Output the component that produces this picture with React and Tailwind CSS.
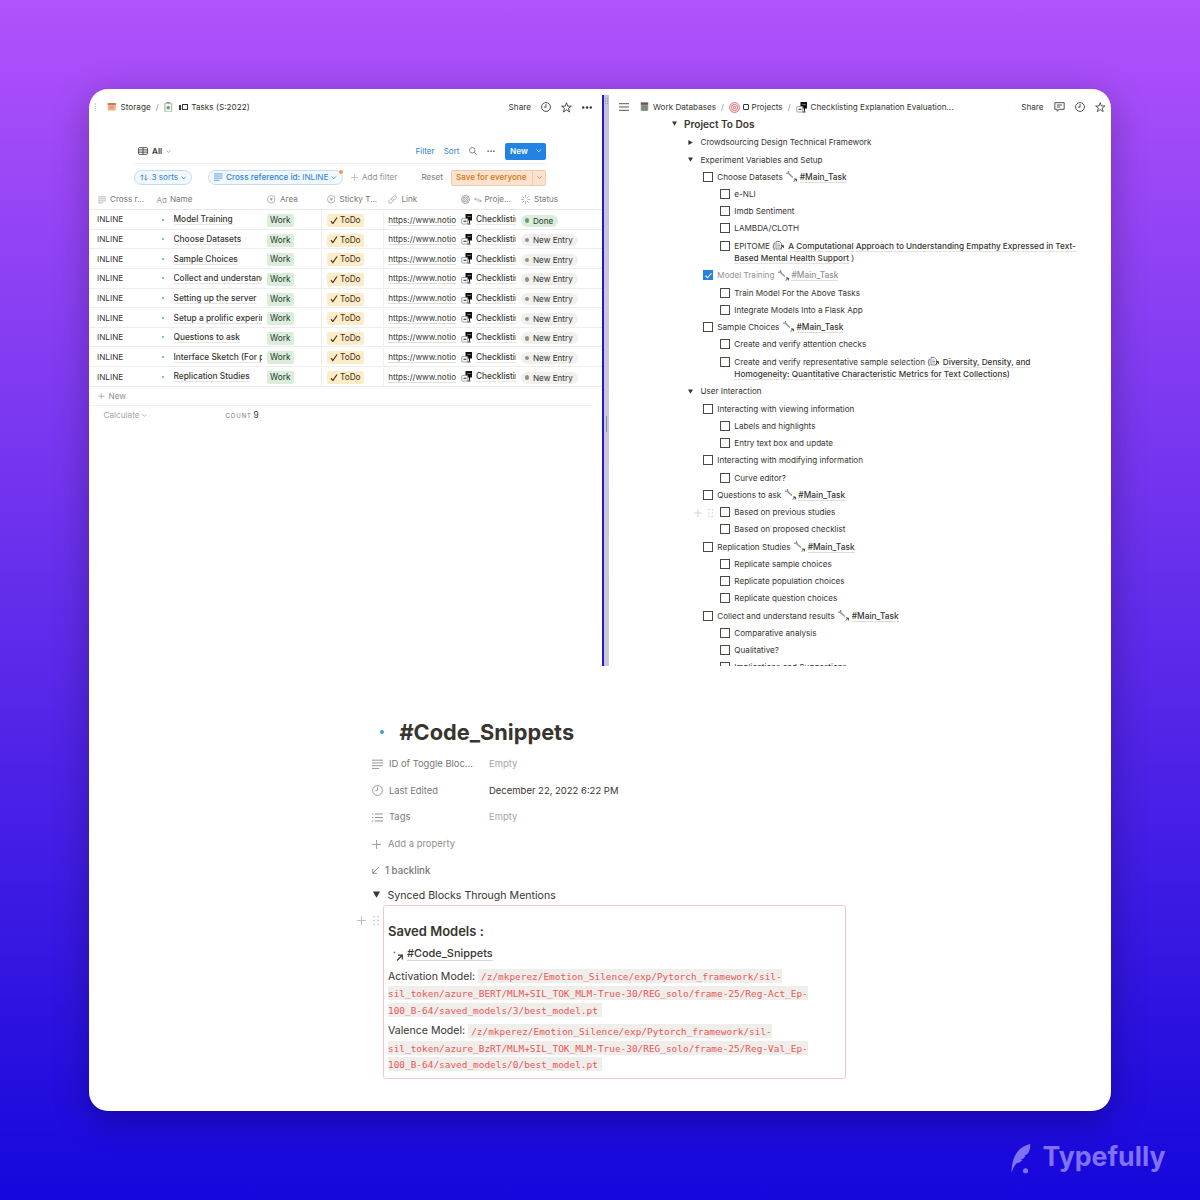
import React from "react";

/* ---------- icons ---------- */
const Lines = ({ className }) => (
  <svg className={className} viewBox="0 0 14 14" stroke="currentColor" strokeWidth="1.2" fill="none">
    <path d="M0 1.5h14M0 5h14M0 8.5h14M0 12h9" />
  </svg>
);
const Clock = ({ className }) => (
  <svg className={className} viewBox="0 0 14 14" stroke="currentColor" strokeWidth="1.2" fill="none">
    <circle cx="7" cy="7" r="6.2" />
    <path d="M7 3v4.2H4" />
  </svg>
);
const Star = ({ className }) => (
  <svg className={className} viewBox="0 0 14 14" stroke="currentColor" strokeWidth="1.1" fill="none" strokeLinejoin="round">
    <path d="M7 .9l1.6 4.4h4.6L9.5 8.1l1.4 4.7L7 10l-3.900 2.800 1.400-4.700L.8 5.300h4.600z" />
  </svg>
);
const Dots = ({ className }) => (
  <svg className={className} viewBox="0 0 14 4" fill="currentColor">
    <circle cx="2" cy="2" r="1.6" /><circle cx="7" cy="2" r="1.6" /><circle cx="12" cy="2" r="1.6" />
  </svg>
);
const Chevron = ({ className }) => (
  <svg className={className} viewBox="0 0 10 6" fill="none" stroke="currentColor" strokeWidth="1.5">
    <path d="M1 .8l4 4 4-4" />
  </svg>
);
const Plus = ({ className }) => (
  <svg className={className} viewBox="0 0 14 14" fill="none" stroke="currentColor" strokeWidth="1.3">
    <path d="M7 0v14M0 7h14" />
  </svg>
);
const Grip = ({ className }) => (
  <svg className={className} viewBox="0 0 8 14" fill="currentColor">
    <path d="M0 0h2v2H0zM6 0H8v2H6zM0 6h2v2H0zM6 6H8v2H6zM0 12h2V14H0zM6 12H8V14H6z" />
  </svg>
);
const Search = ({ className }) => (
  <svg className={className} viewBox="0 0 14 14" fill="none" stroke="currentColor" strokeWidth="1.4">
    <circle cx="5.700" cy="5.700" r="4.800" /><path d="M9.200 9.200l4.300 4.300" />
  </svg>
);
const Select = ({ className }) => (
  <svg className={className} viewBox="0 0 14 14">
    <circle cx="7" cy="7" r="6.200" fill="none" stroke="currentColor" strokeWidth="1.200" />
    <path d="M4.300 5.500h5.400L7 9.700z" fill="currentColor" />
  </svg>
);
const LinkIcon = ({ className }) => (
  <svg className={className} viewBox="0 0 14 14" fill="none" stroke="currentColor" strokeWidth="1.200" strokeLinecap="round">
    <path d="M6 8.200a2.600 2.600 0 0 1 0-3.600l2.700-2.800a2.500 2.500 0 0 1 3.600 3.600L10.500 7.200" />
    <path d="M8 5.800a2.600 2.600 0 0 1 0 3.600l-2.700 2.800a2.500 2.500 0 0 1-3.600-3.600L3.500 6.800" />
  </svg>
);
const TableIcon = ({ className }) => (
  <svg className={className} viewBox="0 0 18 14" fill="none" stroke="currentColor" strokeWidth="1.500">
    <rect x="1" y="1" width="16" height="12" rx="1.500" />
    <path d="M1 5h16M1 9h16M9 1v12" />
  </svg>
);
const Target = ({ className, color }) => (
  <svg className={className} viewBox="0 0 14 14" fill="none" stroke={color} strokeWidth="1.200">
    <circle cx="7" cy="7" r="6.200" /><circle cx="7" cy="7" r="3.900" /><circle cx="7" cy="7" r="1.500" />
  </svg>
);
const Spinner = ({ className }) => (
  <svg className={className} viewBox="0 0 14 14" stroke="currentColor" strokeWidth="1.200" strokeLinecap="round">
    <path d="M7 .8v2.600M7 10.600v2.600M.8 7h2.600M10.600 7h2.600M2.600 2.600l1.900 1.900M9.500 9.500l1.900 1.900M2.600 11.400l1.900-1.900M9.500 4.500l1.900-1.900" />
  </svg>
);
const SortIcon = ({ className }) => (
  <svg className={className} viewBox="0 0 14 12" fill="none" stroke="currentColor" strokeWidth="1.400">
    <path d="M3.800 11V1.500M1 4.200l2.800-2.900 2.800 2.900M10.200 1v9.500M7.600 7.800l2.600 2.900L13 7.800" />
  </svg>
);
const Turn = ({ className }) => (
  <svg className={className} viewBox="0 0 14 10" fill="none" stroke="currentColor" strokeWidth="1.300">
    <path d="M4 1L1.200 3.400 4 5.800M1.200 3.400H9M10 4.200l2.800 2.400L10 9M12.800 6.600H5.500" />
  </svg>
);
const Checks = ({ className }) => (
  <svg className={className} viewBox="0 0 22 22">
    <path d="M9 0h13v13h-4v6h-2v-6H9z" fill="#111" />
    <path d="M12.500 5h7" stroke="#aaa" strokeWidth="1.300" />
    <rect x="1.500" y="9" width="12" height="11" rx="1" fill="#fff" stroke="#888" strokeWidth="1.500" />
    <path d="M5 14.500h6" stroke="#222" strokeWidth="2" />
    <path d="M13 20h6" stroke="#333" strokeWidth="2" />
  </svg>
);
const Wrench = ({ className }) => (
  <svg className={className} viewBox="0 0 20 20" fill="none">
    <path d="M4.500 0L5 4.300 0 4M4.500 4.500L12.500 12" stroke="#8f8f8f" strokeWidth="2.400" />
    <path d="M14 19.500l4.500-5M14.500 14.500h4.500v4.500" stroke="#444" strokeWidth="1.700" />
  </svg>
);
const DocLink = ({ className }) => (
  <svg className={className} viewBox="0 0 20 18" fill="none">
    <path d="M2 1h7l4 4v11H2z" stroke="#666" strokeWidth="1.500" />
    <path d="M4.500 6h5M4.500 9h6M4.500 12h6" stroke="#777" strokeWidth="1.300" />
    <path d="M11 15l5.500-5.500M12 9h5v5" stroke="#333" strokeWidth="1.600" />
  </svg>
);
const Tri = ({ className }) => (
  <svg className={className} viewBox="0 0 10 10" fill="currentColor"><path d="M0 .8h10L5 9.600z" /></svg>
);
const Box = ({ className }) => (
  <svg className={className} viewBox="0 0 18 18">
    <rect x="1.500" y="2" width="15" height="14" rx="1" fill="#eab088" />
    <path d="M1.500 2h15v3.500h-15z" fill="#c9794d" /><path d="M5.500 9h7v2.500h-7z" fill="#cf8a60" />
  </svg>
);
const Battery = ({ className }) => (
  <svg className={className} viewBox="0 0 16 20">
    <rect x="1.500" y="2" width="13" height="17" rx="1.500" fill="#f3f5f3" stroke="#8f9a94" strokeWidth="1.500" />
    <path d="M5 0h6v3H5z" fill="#8a968e" /><circle cx="8" cy="11" r="3.300" fill="#4fae6a" />
  </svg>
);
const Cabinet = ({ className }) => (
  <svg className={className} viewBox="0 0 16 18">
    <rect x="1" y="1" width="14" height="16" fill="#a3a69f" />
    <path d="M1 1h14v4H1z" fill="#6b5650" />
    <path d="M1 9h14M1 13h14M5.500 5v12M10.500 5v12" stroke="#5a6a5c" strokeWidth="1.200" />
  </svg>
);
const Comment = ({ className }) => (
  <svg className={className} viewBox="0 0 16 15" fill="none" stroke="currentColor" strokeWidth="1.300" strokeLinejoin="round">
    <path d="M1 1h14v10H7.500L4.500 13.800V11H1zM4 4.500h8M4 7.500h5" />
  </svg>
);
const Feather = ({ className }) => (
  <svg className={className} viewBox="0 0 60 92" fill="currentColor">
    <path d="M58 0C42 4 27 12 18 25 7 41 1 60 1 88c4-12 9-22 15-29 7-1 14-4 18-10l-6-1c7-1 12-5 16-11l-5-1c6-1 11-5 14-10 4-7 6-15 5-26z" />
    <circle cx="44" cy="82" r="8" />
  </svg>
);

/* ---------- table pane ---------- */
const rows = [
  ["Model Training", true],
  ["Choose Datasets"],
  ["Sample Choices"],
  ["Collect and understand"],
  ["Setting up the server"],
  ["Setup a prolific experim"],
  ["Questions to ask"],
  ["Interface Sketch (For p"],
  ["Replication Studies"],
];

const Row = ({ name, done }) => (
  <div className="flex h-[19.65px] items-center border-b border-[#eeeeed] pt-[0.500px] pl-[8px] whitespace-nowrap">
    <span className="w-[62.500px] text-[8.200px]">INLINE</span>
    <span className="mr-[9.500px] ml-[2.500px] size-[2px] rounded-full bg-[#3fb6a0]" />
    <span className="w-[88.500px] overflow-hidden text-[8.330px] font-medium">
      <span className="underline decoration-[#e6e6e4] decoration-[1px] underline-offset-2">{name}</span>
    </span>
    <span className="flex w-[59.500px] self-stretch border-r border-[#eeeeed] pl-[4.500px] pt-[3.500px]">
      <span className="h-[13px] rounded-[2px] bg-[#dbeddb] px-[3.500px] text-[8.250px] leading-[13px] text-[#1c3829]">Work</span>
    </span>
    <span className="flex w-[62px] self-stretch border-r border-[#f1f1f0] pl-[5px] pt-[3.500px]">
      <span className="flex h-[13px] items-center rounded-[2px] bg-[#fdecc8] px-[3px] text-[8.250px] leading-[13px] text-[#402c1b]">
        <svg className="mr-[2.500px] h-[7.500px] w-[8px]" viewBox="0 0 16 16" fill="none" stroke="#3a2a1a" strokeWidth="2.400"><path d="M1.500 9l4 5L14.500 1" /></svg>
        ToDo
      </span>
    </span>
    <span className="ml-[4.700px] w-[68px] text-[8.100px]">
      <span className="underline decoration-[#dededc] decoration-[1px] underline-offset-2">https://www.notio</span>
    </span>
    <Checks className="ml-[4.800px] h-[11px] w-[11px] shrink-0" />
    <span className="ml-[4px] w-[40.500px] overflow-hidden text-[8.300px] font-medium">
      <span className="underline decoration-[#e6e6e4] decoration-[1px] underline-offset-2">Checklistin</span>
    </span>
    {done ? (
      <span className="mt-[2px] ml-[4.500px] flex h-[12px] items-center rounded-full bg-[#dbeddb] pr-[5px] pl-[4px] text-[8.150px] leading-[12px] text-[#1c3829]">
        <i className="mr-[3.500px] size-[4.500px] rounded-full bg-[#6c9b7d]" />Done
      </span>
    ) : (
      <span className="mt-[2px] ml-[4.500px] flex h-[12px] items-center rounded-full bg-[#f1f0ef] pr-[5px] pl-[4px] text-[8.150px] leading-[12px] text-[#32302c]">
        <i className="mr-[3.500px] size-[4.500px] rounded-full bg-[#91918e]" />New Entry
      </span>
    )}
  </div>
);

const TablePane = () => (
  <div className="flex w-[513px] flex-col pt-[6px] text-[#37352f]">
    <div className="flex h-[24px] items-center pl-[6px] text-[8.200px] whitespace-nowrap">
      <span className="h-[8px] border-l border-dotted border-[#d0d0e4]" />
      <Box className="ml-[10.500px] size-[9.500px]" />
      <span className="ml-[4.500px]">Storage</span>
      <span className="mx-[5px] text-[#8b8a86]">/</span>
      <Battery className="ml-[0.500px] h-[10.500px] w-[8.500px]" />
      <span className="ml-[6px] flex items-center gap-[1.500px]">
        <i className="h-[5px] w-[2px] bg-[#37352f]" />
        <i className="size-[6px] border border-r-[1.500px] border-b-[1.500px] border-[#37352f]" />
      </span>
      <span className="ml-[3px]">Tasks (S:2022)</span>
      <span className="ml-auto">Share</span>
      <Clock className="ml-[10px] size-[10px]" />
      <Star className="ml-[10px] size-[11px]" />
      <Dots className="mr-[9px] ml-[9px] h-[3px] w-[12px]" />
    </div>
    <div className="mt-[20px] mr-[56px] ml-[45px] flex h-[25px] items-center border-b border-[#eeeeed] pl-[4px] text-[8.100px] whitespace-nowrap">
      <TableIcon className="h-[8px] w-[10px]" />
      <span className="ml-[4px] font-semibold">All</span>
      <Chevron className="ml-[4px] h-[3px] w-[5px] text-[#91918e]" />
      <span className="ml-auto text-[#2783de]">Filter</span>
      <span className="ml-[9px] text-[#2783de]">Sort</span>
      <Search className="ml-[9px] size-[8px] text-[#6b6a66]" />
      <Dots className="ml-[10px] h-[2.500px] w-[8px] text-[#7a7975]" />
      <span className="ml-[10.500px] flex h-[17px] w-[41px] items-center rounded-[2px] bg-[#2383e2] pl-[5px] text-[8.200px] font-semibold text-white">
        New<Chevron className="ml-[8.500px] h-[3.500px] w-[5.500px]" />
      </span>
    </div>
    <div className="mr-[56px] ml-[45px] flex h-[27px] items-center text-[8.150px] whitespace-nowrap">
      <span className="flex h-[14.500px] w-[58px] items-center rounded-full border border-[#c3dcf4] bg-[#f3f8fd] pl-[5px] text-[#2783de]">
        <SortIcon className="mr-[3.500px] h-[7px] w-[8px]" />3 sorts<Chevron className="ml-[2.500px] h-[3.500px] w-[5.500px]" />
      </span>
      <span className="relative ml-[16px] flex h-[14.500px] w-[135px] items-center rounded-full border border-[#c3dcf4] bg-[#f3f8fd] pl-[5px] text-[#2783de]">
        <Lines className="mr-[3.500px] size-[8.500px]" />
        <b className="font-medium">Cross reference id:</b>&nbsp;INLINE
        <Chevron className="ml-[3px] h-[3.500px] w-[5.500px]" />
        <i className="absolute -top-[1.500px] -right-[0.500px] size-[4px] rounded-full bg-[#e59a5c]" />
      </span>
      <Plus className="ml-[8px] size-[7px] text-[#a5a4a0]" />
      <span className="ml-[4px] text-[#91908c]">Add filter</span>
      <span className="ml-auto text-[#7d7c78]">Reset</span>
      <span className="ml-[8px] flex h-[16px] w-[95px] items-center rounded-[2px] border border-[#f3c9a8] bg-[#fae3d0] text-[#d9730d]">
        <span className="pl-[4px] font-medium">Save for everyone</span>
        <span className="ml-auto flex h-full w-[13px] items-center justify-center border-l border-[#f3c9a8]"><Chevron className="h-[3px] w-[5px]" /></span>
      </span>
    </div>
    <div className="flex h-[19px] items-center border-b border-[#e9e9e7] pb-px pl-[9px] text-[8.150px] whitespace-nowrap text-[#787774]">
      <Lines className="size-[8px] text-[#9b9a97]" />
      <span className="ml-[4px] w-[46.500px]">Cross r...</span>
      <span className="text-[8px] text-[#9b9a97]">Aɑ</span>
      <span className="ml-[3px] w-[97.500px]">Name</span>
      <Select className="size-[8.500px] text-[#9b9a97]" />
      <span className="ml-[4px] w-[47px]">Area</span>
      <Select className="size-[8.500px] text-[#9b9a97]" />
      <span className="ml-[4px] w-[49px]">Sticky T...</span>
      <LinkIcon className="size-[9px] text-[#9b9a97]" />
      <span className="ml-[4px] w-[60px]">Link</span>
      <Target className="size-[9px]" color="#8b8a86" />
      <Turn className="ml-[4px] h-[6px] w-[8px] text-[#9b9a97]" />
      <span className="ml-[2px] w-[37px]">Proje...</span>
      <Spinner className="size-[9px] text-[#9b9a97]" />
      <span className="ml-[3.500px]">Status</span>
    </div>
    {rows.map(([name, done]) => <Row key={name} name={name} done={done} />)}
    <div className="mr-[9px] flex h-[19px] items-center border-b border-[#f1f1f0] pl-[9px] text-[8.200px] text-[#91908c]">
      <Plus className="mr-[4px] size-[6.500px]" />New
    </div>
    <div className="flex h-[19px] items-center pl-[14.500px] text-[8.200px] text-[#a5a4a0]">
      Calculate<Chevron className="ml-[2px] h-[3px] w-[5px]" />
      <span className="ml-[79px] text-[6px] tracking-[0.900px] text-[#787774]">COUNT</span>
      <span className="ml-[1.500px] text-[8.300px] text-[#37352f]">9</span>
    </div>
  </div>
);

/* ---------- checklist pane ---------- */
const Mention = () => (
  <>
    <Wrench className="mr-[2.300px] ml-[1.500px] inline-block h-[11px] w-[11px] -translate-y-px align-middle" />
    <span className="border-b border-[#dededc] text-[8.350px] font-medium">#Main_Task</span>
  </>
);
const Check = () => <span className="mt-[3.500px] size-[10px] shrink-0 border border-[#4a4945]" />;
const Item = ({ sub, children }) => (
  <div className={sub ? "flex pl-[111px]" : "flex pl-[94px]"}>
    <Check />
    <span className="ml-[4.300px] block py-[2.400px] text-[8.140px] leading-[12.470px]">{children}</span>
  </div>
);
const Toggle = ({ closed, children }) => (
  <div className="flex h-[17.270px] shrink-0 items-center pl-[79px] text-[8.100px]">
    <Tri className={closed ? "size-[5px] -rotate-90" : "size-[5px]"} />
    <span className="ml-[7.500px]">{children}</span>
  </div>
);
const linked = "border-b border-[#e4e4e2] text-[8.210px] font-medium";

const ChecklistPane = () => (
  <div className="flex h-[577px] w-[502px] flex-col overflow-hidden pt-[6px] whitespace-nowrap text-[#37352f]">
    <div className="flex h-[24px] shrink-0 items-center pr-[6px] pl-[10px] text-[8.150px]">
      <svg className="h-[8px] w-[10px]" viewBox="0 0 10 8" stroke="#55534e" strokeWidth="1"><path d="M0 .7h10M0 4h10M0 7.300h10" /></svg>
      <Cabinet className="ml-[10.500px] h-[9.500px] w-[9px]" />
      <span className="ml-[4.500px]">Work Databases</span>
      <span className="mx-[5px] text-[#8b8a86]">/</span>
      <Target className="size-[11px]" color="#dd5a5f" />
      <i className="ml-[3.500px] size-[6px] rounded-[1px] border border-r-[1.500px] border-b-[1.500px] border-[#37352f]" />
      <span className="ml-[2px]">Projects</span>
      <span className="mx-[5px] text-[#8b8a86]">/</span>
      <Checks className="size-[11px]" />
      <span className="ml-[4px]">Checklisting Explanation Evaluation...</span>
      <span className="ml-auto">Share</span>
      <Comment className="ml-[10px] h-[10px] w-[11px]" />
      <Clock className="ml-[10px] size-[10px]" />
      <Star className="ml-[10px] size-[10.500px]" />
    </div>
    <div className="-mt-[3px] flex h-[17.700px] shrink-0 items-center pl-[62.500px]">
      <Tri className="size-[5px] -translate-y-px" />
      <span className="ml-[7.500px] text-[10.080px] font-semibold">Project To Dos</span>
    </div>
    <Toggle closed>Crowdsourcing Design Technical Framework</Toggle>
    <Toggle>Experiment Variables and Setup</Toggle>
    <Item>Choose Datasets <Mention /></Item>
    <Item sub>e-NLI</Item>
    <Item sub>Imdb Sentiment</Item>
    <Item sub>LAMBDA/CLOTH</Item>
    <Item sub>
      EPITOME (<DocLink className="mr-[3px] inline-block h-[9px] w-[10px] -translate-y-px align-middle" /><span className={linked}>A Computational Approach to Understanding Empathy Expressed in Text-</span><br />
      <span className={linked}>Based Mental Health Support</span> )
    </Item>
    <div className="flex pl-[94px] text-[#91908c]">
      <span className="mt-[3.500px] flex size-[10px] shrink-0 items-center justify-center bg-[#2383e2]">
        <svg className="size-[7px]" viewBox="0 0 14 14" fill="none" stroke="#fff" strokeWidth="2.200"><path d="M1 7.500l4 4L13 2.500" /></svg>
      </span>
      <span className="ml-[4.300px] block py-[2.400px] text-[8.140px] leading-[12.470px]">Model Training <Mention /></span>
    </div>
    <Item sub>Train Model For the Above Tasks</Item>
    <Item sub>Integrate Models Into a Flask App</Item>
    <Item>Sample Choices <Mention /></Item>
    <Item sub>Create and verify attention checks</Item>
    <Item sub>
      Create and verify representative sample selection (<DocLink className="mr-[2.500px] inline-block h-[9px] w-[10px] -translate-y-px align-middle" /><span className={linked}>Diversity, Density, and</span><br />
      <span className="border-b border-[#e4e4e2] text-[8.230px] font-medium">Homogeneity: Quantitative Characteristic Metrics for Text Collections)</span>
    </Item>
    <Toggle>User Interaction</Toggle>
    <Item>Interacting with viewing information</Item>
    <Item sub>Labels and highlights</Item>
    <Item sub>Entry text box and update</Item>
    <Item>Interacting with modifying information</Item>
    <Item sub>Curve editor?</Item>
    <Item>Questions to ask <Mention /></Item>
    <div className="relative">
      <Item sub>Based on previous studies</Item>
      <div className="absolute top-[5px] left-[84.500px] flex items-center gap-[6px] text-[#c4c3c0]">
        <Plus className="size-[8px]" /><Grip className="h-[8px] w-[5px]" />
      </div>
    </div>
    <Item sub>Based on proposed checklist</Item>
    <Item>Replication Studies <Mention /></Item>
    <Item sub>Replicate sample choices</Item>
    <Item sub>Replicate population choices</Item>
    <Item sub>Replicate question choices</Item>
    <Item>Collect and understand results <Mention /></Item>
    <Item sub>Comparative analysis</Item>
    <Item sub>Qualitative?</Item>
    <Item sub>Implications and Suggestions</Item>
  </div>
);

/* ---------- snippets page ---------- */
const Prop = ({ icon, label, children, muted }) => (
  <div className="flex h-[26.450px] items-center">
    <span className="w-[17px] text-[#91908c]">{icon}</span>
    <span className="w-[100px] text-[9.400px] text-[#787774]">{label}</span>
    <span className={muted ? "text-[9.450px] text-[#a5a4a0]" : "text-[9.480px] text-[#37352f]"}>{children}</span>
  </div>
);
const code = "bg-[#efeeeb] py-[1.500px] font-['DejaVu_Sans_Mono',monospace] text-[9.430px] text-[#eb5757]";

const SnippetsPage = () => (
  <div className="mt-[47px] ml-[283px] w-[475px] text-[#37352f]">
    <div className="flex h-[37px] items-center">
      <i className="ml-[7.500px] size-[4px] -translate-y-px rounded-full bg-[#35a0d8]" />
      <h1 className="ml-[16px] -translate-y-[0.500px] text-[21.750px] font-bold">#Code_Snippets</h1>
    </div>
    <div className="pt-[0.300px]">
      <Prop muted icon={<Lines className="size-[11px]" />} label="ID of Toggle Bloc...">Empty</Prop>
      <Prop icon={<Clock className="size-[11px]" />} label="Last Edited">December 22, 2022 6:22 PM</Prop>
      <Prop muted icon={<svg className="h-[9px] w-[11px]" viewBox="0 0 11 9" stroke="currentColor" strokeWidth="1"><path d="M0 1h1.500M3 1h8M0 4.500h1.500M3 4.500h8M0 8h1.500M3 8h8" /></svg>} label="Tags">Empty</Prop>
    </div>
    <div className="flex h-[26.800px] items-center text-[9.430px] text-[#91908c]">
      <Plus className="mr-[7px] size-[9px]" />Add a property
    </div>
    <div className="flex h-[27px] items-center text-[9.700px] font-medium text-[#787774]">
      <svg className="mr-[6px] size-[7px]" viewBox="0 0 10 10" fill="none" stroke="currentColor" strokeWidth="1.200"><path d="M9.500.5L1 9M1 3v6h6" /></svg>
      1 backlink
    </div>
    <div className="flex h-[20.150px] items-center pt-[3px] text-[10.580px]">
      <Tri className="mr-[8px] ml-[0.500px] size-[7px] -translate-y-px" /><span className="leading-none">Synced Blocks Through Mentions</span>
    </div>
    <div className="relative ml-[11px] h-[174px] w-[463px] rounded-[3px] border border-[#f6c6c2] pl-[4px] whitespace-nowrap">
      <div className="absolute top-[10px] -left-[27px] flex items-center gap-[7px] text-[#b5b4b1]">
        <Plus className="size-[9px]" /><Grip className="h-[9px] w-[6px]" />
      </div>
      <h2 className="mt-[16px] text-[13px] leading-[18px] font-semibold">Saved Models :</h2>
      <div className="mt-[5px] flex h-[18px] items-center">
        <svg className="mr-[4px] ml-[5px] h-[10px] w-[10px] translate-y-[2px]" viewBox="0 0 10 10" fill="none">
          <circle cx="1.500" cy="1.500" r="1" fill="#35a0b8" /><path d="M4 9.500L9 4.500M5 4.200h4.300v4.300" stroke="#37352f" strokeWidth="1.200" />
        </svg>
        <span className="border-b border-[#d8d8d6] text-[10.950px] leading-[13px] font-medium">#Code_Snippets</span>
      </div>
      <p className="mt-[6.200px] text-[10.600px] leading-[16.700px]">
        Activation Model: <code className={code + " pl-[3px]"}>/z/mkperez/Emotion_Silence/exp/Pytorch_framework/sil-</code><br />
        <code className={code}>sil_token/azure_BERT/MLM+SIL_TOK_MLM-True-30/REG_solo/frame-25/Reg-Act_Ep-</code><br />
        <code className={code + " pr-[4px]"}>100_B-64/saved_models/3/best_model.pt</code>
      </p>
      <p className="mt-[4.500px] text-[10.600px] leading-[16.700px]">
        Valence Model: <code className={code + " pl-[3px]"}>/z/mkperez/Emotion_Silence/exp/Pytorch_framework/sil-</code><br />
        <code className={code}>sil_token/azure_BzRT/MLM+SIL_TOK_MLM-True-30/REG_solo/frame-25/Reg-Val_Ep-</code><br />
        <code className={code + " pr-[4px]"}>100_B-64/saved_models/0/best_model.pt</code>
      </p>
    </div>
  </div>
);

export default function App() {
  return (
    <div className="flex h-[1200px] w-[1200px] flex-col overflow-hidden bg-[linear-gradient(180deg,#b152fb_0%,#1507dc_100%)] pt-[89px] font-['Inter',sans-serif]">
      <main className="mx-auto h-[1022px] w-[1022px] shrink-0 overflow-hidden rounded-[19px] bg-white shadow-[0_8px_36px_rgba(0,0,0,0.280)]">
        <div className="flex h-[578px]">
          <TablePane />
          <div className="mt-[6px] flex h-[571px] w-[7px] flex-col items-end border-l-2 border-[#2317e0] bg-[linear-gradient(180deg,#c4c3d4,#cfc6da_40%,#cacad0)]">
            <Grip className="mt-[2px] mr-[1px] h-[8px] w-[3px] text-[#77768a]" />
            <i className="mt-[311px] mr-[2px] h-[16px] w-px bg-[#8e8e96]" />
          </div>
          <ChecklistPane />
        </div>
        <SnippetsPage />
      </main>
      <footer className="mt-[27px] mr-[34.500px] flex items-center justify-end text-[#8072f0]">
        <Feather className="mt-[5px] mr-[11.500px] h-[30px] w-[20px]" />
        <span className="text-[26.700px] leading-[36px] font-bold">Typefully</span>
      </footer>
    </div>
  );
}
